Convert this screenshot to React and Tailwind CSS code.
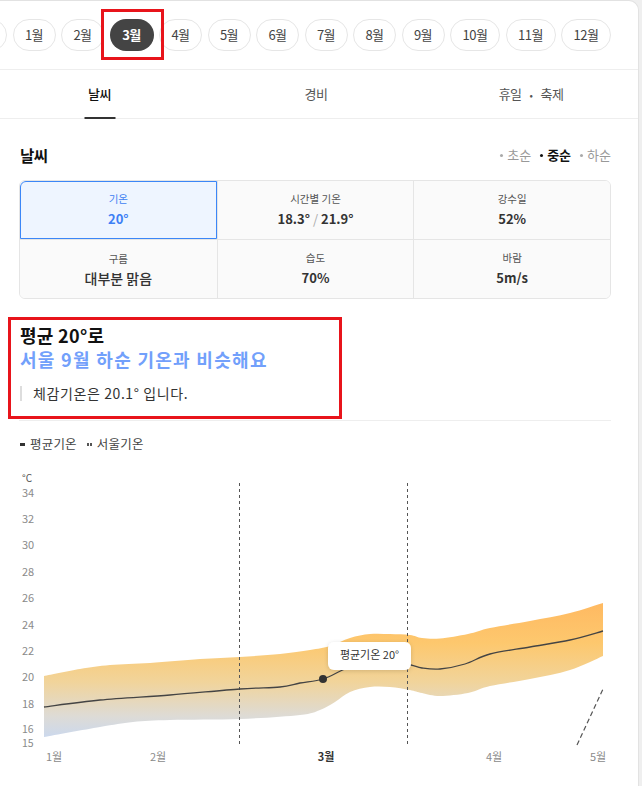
import React from 'react';

const months = ['1월', '2월', '3월', '4월', '5월', '6월', '7월', '8월', '9월', '10월', '11월', '12월'];

// chart points in page coordinates
const upper = [[44, 674], [80, 667], [110, 663], [150, 661], [200, 657], [240, 655], [280, 652], [310, 648], [330, 644], [350, 636], [370, 632], [390, 632], [410, 633], [422, 636], [440, 636.5], [468, 632], [490, 626], [530, 619], [570, 611], [603, 601]];
const lower = [[44, 735], [100, 725], [133, 720], [170, 718], [240, 717], [300, 713], [320, 708], [335, 700], [350, 690], [370, 685], [390, 685], [410, 688], [422, 691], [440, 694], [468, 691], [490, 684], [530, 677], [570, 668], [603, 654]];
const mean = [[44, 705], [100, 698], [170, 693], [240, 687], [280, 685], [300, 681], [323, 677], [345, 667], [370, 658], [392, 659], [411, 663], [422, 666], [440, 667], [465, 662], [490, 652], [530, 645], [570, 638], [603, 629]];

function smooth(pts, move = true) {
  let d = move ? `M${pts[0][0]},${pts[0][1]}` : `L${pts[0][0]},${pts[0][1]}`;
  for (let i = 0; i < pts.length - 1; i++) {
    const p0 = pts[i - 1] || pts[i];
    const p1 = pts[i];
    const p2 = pts[i + 1];
    const p3 = pts[i + 2] || p2;
    const c1 = [p1[0] + (p2[0] - p0[0]) / 6, p1[1] + (p2[1] - p0[1]) / 6];
    const c2 = [p2[0] - (p3[0] - p1[0]) / 6, p2[1] - (p3[1] - p1[1]) / 6];
    d += ` C${c1[0]},${c1[1]} ${c2[0]},${c2[1]} ${p2[0]},${p2[1]}`;
  }
  return d;
}

const bandPath = smooth(upper) + ' ' + smooth([...lower].reverse(), false) + ' Z';
const meanPath = smooth(mean);

const yTicks = [34, 32, 30, 28, 26, 24, 22, 20, 18];
const yOf = (t) => 742 - 13.2 * (t - 15);

const Chart = () => (
  <svg width="639" height="321" viewBox="0 465 639 321" className="block">
    <defs>
      <linearGradient id="band" gradientUnits="userSpaceOnUse" x1="0" y1="600" x2="0" y2="738">
        <stop offset="0" stopColor="#ffb961" />
        <stop offset="0.3" stopColor="#fdc86e" />
        <stop offset="0.58" stopColor="#f1d49b" />
        <stop offset="0.83" stopColor="#dddbd6" />
        <stop offset="1" stopColor="#c9d8f0" />
      </linearGradient>
      <filter id="shadow" x="-20%" y="-40%" width="140%" height="180%">
        <feDropShadow dx="0" dy="1" stdDeviation="2" floodColor="#000" floodOpacity="0.15" />
      </filter>
    </defs>
    <text x="22" y="477" fontSize="10" fill="#555" dominantBaseline="middle">°C</text>
    {yTicks.map((t) => (
      <text key={t} x="22" y={yOf(t) + 0.5} fontSize="11" fill="#8a8a8a" dominantBaseline="middle">{t}</text>
    ))}
    <text x="22" y="728.5" fontSize="10.5" fill="#8a8a8a" dominantBaseline="middle">16</text>
    <text x="22" y="742.5" fontSize="10.5" fill="#8a8a8a" dominantBaseline="middle">15</text>

    <path d={bandPath} fill="url(#band)" />

    <line x1="239.5" y1="481" x2="239.5" y2="743" stroke="#555" strokeWidth="1" strokeDasharray="3 3" />
    <line x1="407.5" y1="481" x2="407.5" y2="743" stroke="#555" strokeWidth="1" strokeDasharray="3 3" />

    <path d={meanPath} fill="none" stroke="#444" strokeWidth="1.3" />
    <circle cx="323" cy="677" r="4" fill="#333" />

    <line x1="577" y1="743" x2="603" y2="687" stroke="#555" strokeWidth="1.2" strokeDasharray="5 3" />

    <g filter="url(#shadow)">
      <rect x="328" y="640" width="83" height="28" rx="6" fill="#fff" />
    </g>
    <text x="369.5" y="654.5" fontSize="11" fill="#333" textAnchor="middle" dominantBaseline="middle">평균기온 20°</text>

    <text x="54" y="756" fontSize="11" fill="#8a8a8a" textAnchor="middle" dominantBaseline="middle">1월</text>
    <text x="158" y="756" fontSize="11" fill="#8a8a8a" textAnchor="middle" dominantBaseline="middle">2월</text>
    <text x="326" y="756" fontSize="11" fill="#333" fontWeight="700" textAnchor="middle" dominantBaseline="middle">3월</text>
    <text x="494" y="756" fontSize="11" fill="#8a8a8a" textAnchor="middle" dominantBaseline="middle">4월</text>
    <text x="598" y="756" fontSize="11" fill="#8a8a8a" textAnchor="middle" dominantBaseline="middle">5월</text>
  </svg>
);

const Cell = ({ label, value, active, big }) => (
  <div
    className={
      'flex flex-col items-center justify-center h-[58px] ' +
      (active ? 'bg-[#eef5ff] outline outline-1 outline-[#3b86f7] -outline-offset-1 rounded-tl-[6px]' : 'bg-[#fafafa]')
    }
  >
    <div className={'text-[10.5px] leading-[14px] ' + (active ? 'text-[#3f82f2]' : 'text-[#555]')}>{label}</div>
    <div
      className={
        (big ? 'text-[14px] font-medium mt-[3px] ' : 'text-[13px] font-semibold mt-[4px] ') +
        'leading-[18px] ' +
        (active ? 'text-[#3d80f5]' : 'text-[#333]')
      }
    >
      {value}
    </div>
  </div>
);

const Dot = ({ dark }) => (
  <span className={'inline-block w-[3px] h-[3px] rounded-full mr-[4px] ' + (dark ? 'bg-[#111]' : 'bg-[#aaa]')} />
);

const App = () => {
  return (
    <div className="w-[642px] h-[786px] bg-[#efefef] overflow-hidden font-['Noto_Sans_CJK_KR',sans-serif]">
      <div className="w-[639px] h-[786px] bg-white border-t border-r border-[#e2e2e2] rounded-tr-[10px] overflow-hidden">
        {/* month pills */}
        <div className="h-[69px] border-b border-[#eeeeee] flex items-center overflow-hidden">
          <div className="flex items-center gap-[5.5px] ml-[-36px] shrink-0">
            <div className="w-[43px] h-[32px] rounded-full border border-[#e6e6e6] shrink-0" />
            {months.map((m) => {
              const wide = m.length > 2;
              if (m === '3월') {
                return (
                  <div key={m} className="relative shrink-0">
                    <div className="w-[44px] h-[32px] rounded-full bg-[#444] text-white text-[13px] font-bold flex items-center justify-center tracking-[-0.5px]">
                      {m}
                    </div>
                    <div className="absolute left-[-9px] top-[-10px] w-[63px] h-[51px] border-[3px] border-[#e8141b]" />
                  </div>
                );
              }
              return (
                <div
                  key={m}
                  className={
                    (wide ? 'w-[50px] ' : 'w-[43px] ') +
                    'h-[32px] shrink-0 rounded-full border border-[#e6e6e6] text-[13px] text-[#444] flex items-center justify-center tracking-[-0.5px]'
                  }
                >
                  {m}
                </div>
              );
            })}
          </div>
        </div>

        {/* tabs */}
        <div className="h-[49px] border-b border-[#eeeeee] flex text-[13px] tracking-[-0.5px]">
          <div className="w-[199px] relative flex items-center justify-center text-[#111] font-medium">
            날씨
            <div className="absolute bottom-[-1px] left-1/2 -translate-x-1/2 w-[31px] h-[2px] bg-[#333]" />
          </div>
          <div className="w-[234px] flex items-center justify-center text-[#555]">경비</div>
          <div className="w-[196px] flex items-center justify-center text-[#555]">
            휴일<span className="mx-[8px] text-[10px]">•</span>축제
          </div>
        </div>

        {/* weather */}
        <div className="pl-[19px] pr-[27px]">
          <div className="mt-[25px] h-[22px] flex items-center justify-between">
            <div className="ml-[1px] text-[15.5px] leading-[22px] font-bold text-[#111] tracking-[-0.5px]">날씨</div>
            <div className="flex items-center text-[13px] tracking-[0px]">
              <Dot />
              <span className="text-[#999]">초순</span>
              <span className="ml-[9px]" />
              <Dot dark />
              <span className="text-[#111] font-bold">중순</span>
              <span className="ml-[9px]" />
              <Dot />
              <span className="text-[#999]">하순</span>
            </div>
          </div>

          <div className="mt-[14px] border border-[#e5e5e5] rounded-[6px] overflow-hidden grid grid-cols-3">
            <Cell label="기온" value="20°" active />
            <div className="border-l border-[#e5e5e5]">
              <Cell
                label="시간별 기온"
                value={
                  <span>
                    18.3° <span className="text-[#aaa] font-normal">/</span> 21.9°
                  </span>
                }
              />
            </div>
            <div className="border-l border-[#e5e5e5]">
              <Cell label="강수일" value="52%" />
            </div>
            <div className="border-t border-[#e5e5e5]">
              <Cell label="구름" value="대부분 맑음" big />
            </div>
            <div className="border-t border-l border-[#e5e5e5]">
              <Cell label="습도" value="70%" />
            </div>
            <div className="border-t border-l border-[#e5e5e5]">
              <Cell label="바람" value="5m/s" />
            </div>
          </div>

          {/* summary */}
          <div className="pb-[17px] border-b border-[#eeeeee]">
            <div className="relative mt-[24px] ml-[1px]">
              <div className="text-[18px] leading-[24px] font-bold text-[#111] tracking-[0.3px]">평균 20°로</div>
              <div className="text-[18px] leading-[24px] font-bold text-[#72a0fb] tracking-[1.3px]">서울 9월 하순 기온과 비슷해요</div>
              <div className="mt-[12px] flex items-center h-[20px]">
                <div className="w-[2px] h-[15px] bg-[#dddddd]" />
                <div className="ml-[11px] text-[14px] leading-[20px] text-[#333] tracking-[0.6px]">체감기온은 20.1° 입니다.</div>
              </div>
              <div className="absolute left-[-12px] top-[-6px] w-[334px] h-[102px] border-[3px] border-[#e8141b]" />
            </div>
          </div>

          {/* legend */}
          <div className="mt-[15px] h-[16px] flex items-center text-[12.5px] text-[#444] tracking-[0.2px] ml-[1px]">
            <span className="w-[5px] h-[3px] bg-[#333] inline-block" />
            <span className="ml-[5px]">평균기온</span>
            <span className="ml-[10px] flex gap-[1px]">
              <span className="w-[2px] h-[3px] bg-[#555] inline-block" />
              <span className="w-[2px] h-[3px] bg-[#555] inline-block" />
            </span>
            <span className="ml-[5px]">서울기온</span>
          </div>
        </div>

        <div className="mt-[15px]">
          <Chart />
        </div>
      </div>
    </div>
  );
};

export default App;
